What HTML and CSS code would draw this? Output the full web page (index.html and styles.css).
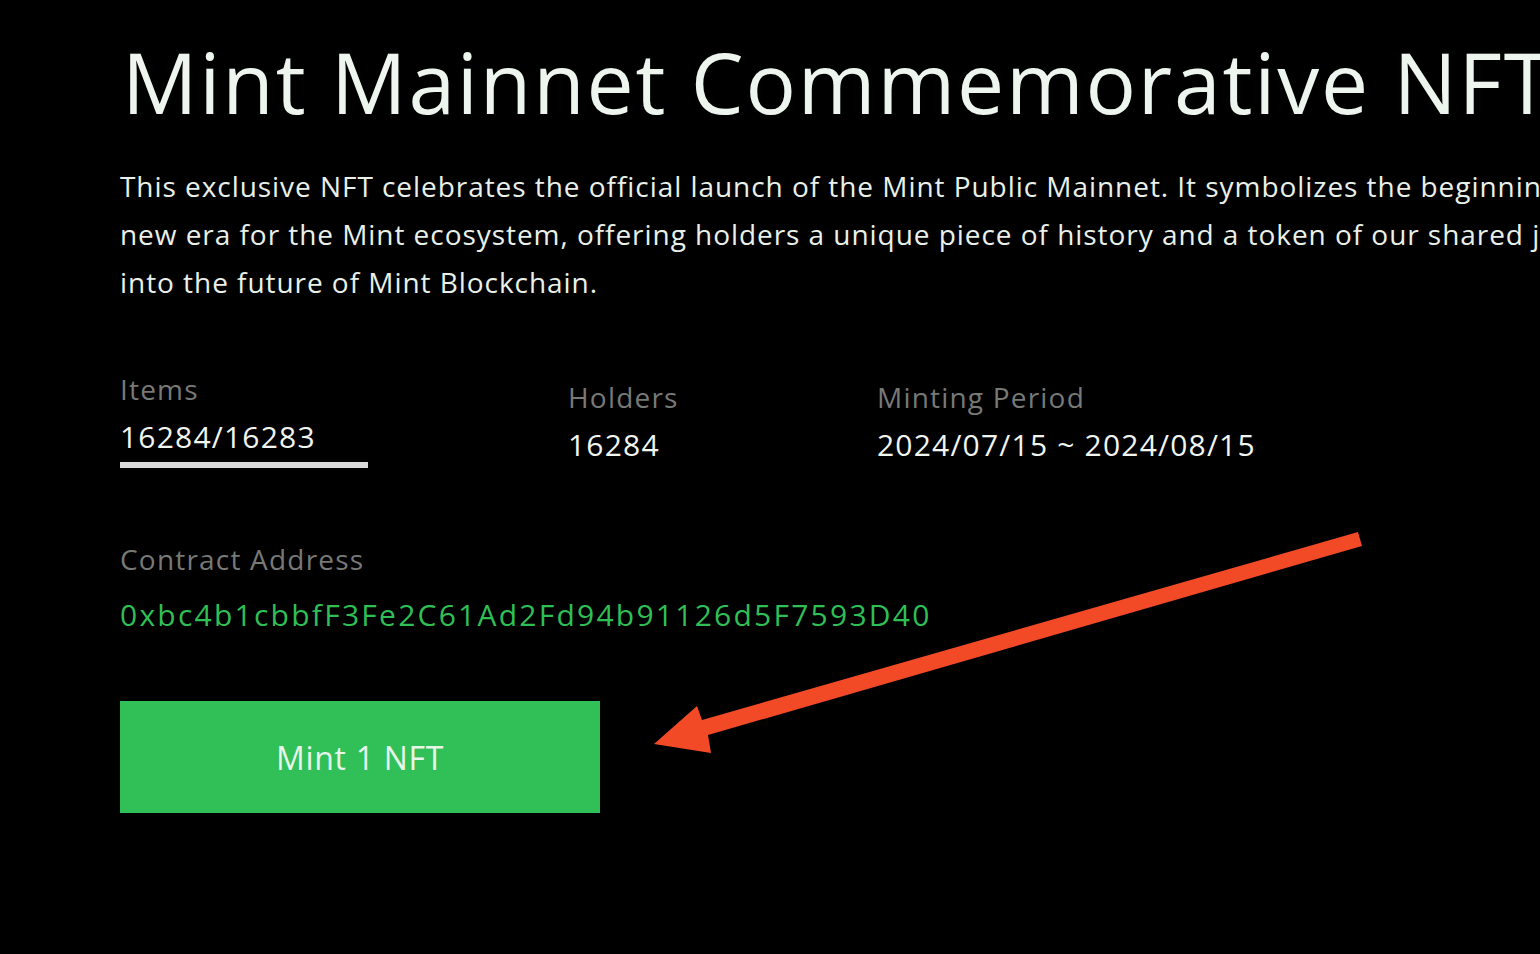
FILE: index.html
```html
<!DOCTYPE html>
<html lang="en">
<head>
<meta charset="utf-8">
<title>Mint Mainnet Commemorative NFT</title>
<link rel="stylesheet" href="styles.css">
</head>
<body>
<main class="page">
  <h1 class="title">Mint Mainnet Commemorative NFT</h1>
  <p class="intro">This exclusive NFT celebrates the official launch of the Mint Public Mainnet. It symbolizes the beginning of a<br>new era for the Mint ecosystem, offering holders a unique piece of history and a token of our shared journey<br>into the future of Mint Blockchain.</p>

  <section class="stats">
    <div class="stat stat-items">
      <div class="stat-label">Items</div>
      <div class="stat-value">16284/16283</div>
      <div class="stat-bar"></div>
    </div>
    <div class="stat stat-holders">
      <div class="stat-label">Holders</div>
      <div class="stat-value">16284</div>
    </div>
    <div class="stat stat-period">
      <div class="stat-label">Minting Period</div>
      <div class="stat-value">2024/07/15 ~ 2024/08/15</div>
    </div>
  </section>

  <section class="contract">
    <div class="stat-label">Contract Address</div>
    <div class="address">0xbc4b1cbbfF3Fe2C61Ad2Fd94b91126d5F7593D40</div>
  </section>

  <button class="mint-btn" type="button">Mint 1 NFT</button>
</main>

<svg class="annotation" width="1540" height="954" viewBox="0 0 1540 954" aria-hidden="true">
  <polygon fill="#f24a26" points="1358,532 1362,546 708,735 711,753 654,744 697,706 702,720"/>
</svg>
</body>
</html>
```

FILE: styles.css
```css
html, body {
  margin: 0;
  padding: 0;
  background: #000;
  overflow: hidden;
}

body {
  width: 1540px;
  height: 954px;
  position: relative;
  font-family: "Open Sans", "Liberation Sans", sans-serif;
  color: #eef5ee;
}

.page {
  display: flex;
  flex-direction: column;
  align-items: flex-start;
  padding: 32px 0 0 120px;
  white-space: nowrap;
  overflow: hidden;
}

.title {
  margin: 0 0 0 2px;
  font-size: 84px;
  line-height: 100px;
  font-weight: 400;
  color: #edf5ee;
  letter-spacing: 1.8px;
}

.intro {
  margin: 30px 0 0 0;
  font-size: 28px;
  line-height: 48px;
  color: #e9f0e9;
  letter-spacing: 0.95px;
}

.stats {
  margin-top: 63px;
  display: flex;
  align-items: flex-start;
}

.stat {
  display: flex;
  flex-direction: column;
  align-items: flex-start;
}

.stat-items { width: 448px; }
.stat-holders { width: 309px; padding-top: 8px; }
.stat-period { padding-top: 8px; }

.stat-label {
  font-size: 28px;
  line-height: 40px;
  color: #777977;
  letter-spacing: 1.2px;
}

.stat-value {
  margin-top: 8px;
  font-size: 30px;
  line-height: 40px;
  color: #f0f5f0;
  letter-spacing: 1.2px;
}

.stat-bar {
  margin-top: 5px;
  width: 248px;
  height: 6px;
  background: #d9d9d9;
}

.contract {
  margin-top: 71px;
  display: flex;
  flex-direction: column;
}

.address {
  margin-top: 16px;
  font-size: 30px;
  line-height: 40px;
  color: #2fbf55;
  letter-spacing: 2.25px;
}

.mint-btn {
  margin-top: 66px;
  width: 480px;
  height: 112px;
  border: 0;
  border-radius: 0;
  background: #31bf58;
  color: #e8f5e9;
  font-family: inherit;
  font-size: 32px;
  letter-spacing: 0.7px;
  display: flex;
  align-items: center;
  justify-content: center;
  padding: 0;
}

.annotation {
  position: absolute;
  top: 0;
  left: 0;
  pointer-events: none;
}
```
